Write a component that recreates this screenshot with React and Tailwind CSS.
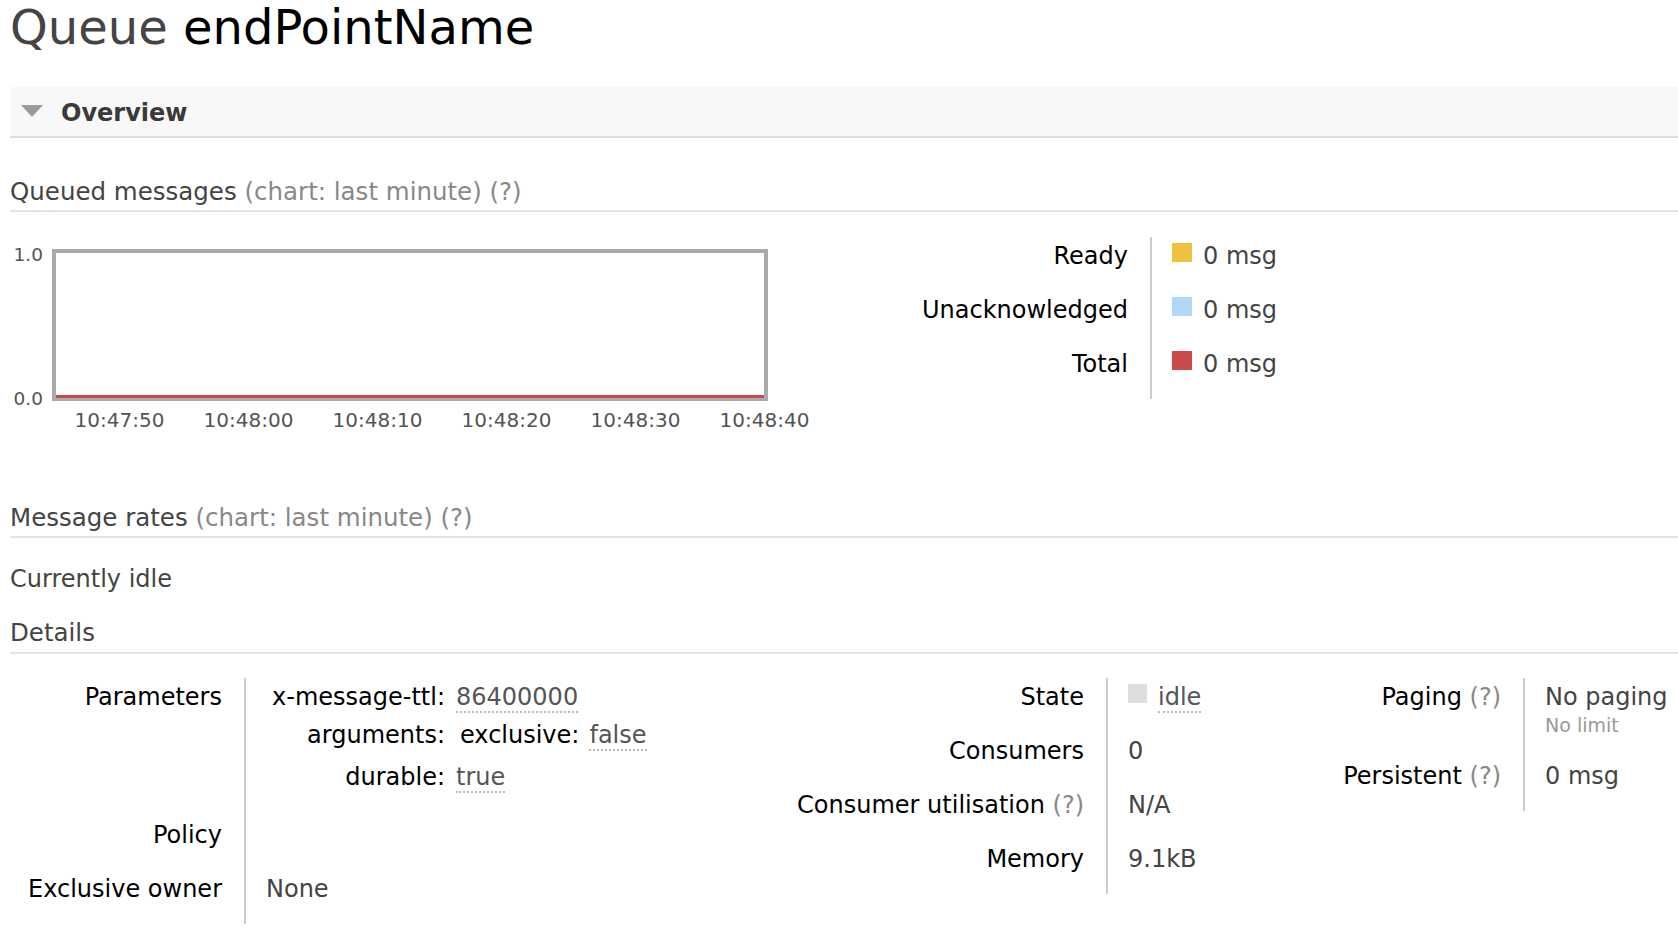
export default function App() {
  const legend = [
    { label: "Ready", sw: "bg-[#edc240]" },
    { label: "Unacknowledged", sw: "bg-[#afd8f8]" },
    { label: "Total", sw: "bg-[#cb4b4b]" },
  ];
  const times = ["10:47:50", "10:48:00", "10:48:10", "10:48:20", "10:48:30", "10:48:40"];
  const dotted = "border-b-2 border-dotted border-[#bbb] text-[#555]";
  return (
    <div className="min-h-[928px] bg-white pl-[10px] font-['DejaVu_Sans',Verdana,sans-serif] text-[24px] leading-[28px] text-black">
      <h1 className="text-[48px] leading-[55px] font-normal">
        <span className="text-[#444]">Queue</span> <span className="text-black">endPointName</span>
      </h1>

      <div className="mt-[32px] flex h-[51px] items-center border-b-2 border-[#dddddd] bg-[#f8f8f8] pt-[3px]">
        <svg width="22" height="12" viewBox="0 0 22 12" className="ml-[11px] -mt-[5px]">
          <polygon points="0,0 22,0 11,12" fill="#9a9a9a" />
        </svg>
        <span className="ml-[18px] font-bold text-[#3a3a3a]">Overview</span>
      </div>

      <div className="mt-[40px] border-b-2 border-[#e4e4e4] pb-[4px] text-[24.5px] text-[#444]">
        Queued messages <span className="text-[#888]">(chart: last minute) (?)</span>
      </div>

      <div className="flex items-start">
        <div className="w-[850px] mt-[37px]">
          <div className="flex items-start">
            <div className="-mt-[3px] -mb-[7px] flex h-[162px] w-[42px] flex-col justify-between pr-[9px] text-right text-[18.5px] leading-[18px] text-[#545454]">
              <span>1.0</span>
              <span>0.0</span>
            </div>
            <div className="flex h-[152px] w-[716px] flex-col justify-end border-x-4 border-t-4 border-b-[3px] border-[#aaaaaa] bg-white">
              <div className="h-[3px] bg-[#cb4b4b]" />
            </div>
          </div>
          <div className="ml-[45px] mt-[8px] flex text-[20px] leading-[22px] text-[#545454]">
            {times.map((t) => (
              <div key={t} className="w-[129px] shrink-0 text-center">
                {t}
              </div>
            ))}
          </div>
        </div>
        <div className="mt-[25px]">
          {legend.map((r) => (
            <div key={r.label} className="flex h-[54px]">
              <div className="w-[290px] pr-[22px] pt-[5px] text-right">{r.label}</div>
              <div className="flex items-start border-l-2 border-[#cccccc] pl-[20px] pt-[5px]">
                <span className={"mt-[1px] block h-[19px] w-[20px] " + r.sw} />
                <span className="ml-[11px] text-[#444]">0 msg</span>
              </div>
            </div>
          ))}
        </div>
      </div>

      <div className="mt-[73px] border-b-2 border-[#e4e4e4] pb-[4px] text-[24.5px] text-[#444]">
        Message rates <span className="text-[#888]">(chart: last minute) (?)</span>
      </div>

      <div className="mt-[27px] text-[#444]">Currently idle</div>

      <div className="mt-[26px] border-b-2 border-[#e4e4e4] pb-[5px] text-[24.5px] text-[#444]">Details</div>

      <div className="mt-[24px] flex items-start">
        <div className="w-[750px] shrink-0">
          <div className="flex">
            <div className="w-[234px] shrink-0 pr-[22px] pt-[5px] text-right">Parameters</div>
            <div className="flex flex-1 flex-col border-l-2 border-[#cccccc] pl-[20px] pt-[5px] pb-[25px]">
              <div className="flex">
                <span className="w-[179px] shrink-0 text-right">x-message-ttl:</span>
                <span className="pl-[11px]">
                  <span className={dotted}>86400000</span>
                </span>
              </div>
              <div className="mt-[10px] flex">
                <span className="w-[179px] shrink-0 text-right">arguments:</span>
                <span className="pl-[15px]">exclusive:</span>
                <span className="ml-[10px]">
                  <span className={dotted}>false</span>
                </span>
              </div>
              <div className="mt-[14px] flex">
                <span className="w-[179px] shrink-0 text-right">durable:</span>
                <span className="pl-[11px]">
                  <span className={dotted}>true</span>
                </span>
              </div>
            </div>
          </div>
          <div className="flex h-[54px]">
            <div className="w-[234px] shrink-0 pr-[22px] pt-[5px] text-right">Policy</div>
            <div className="flex-1 border-l-2 border-[#cccccc] pl-[20px] pt-[5px]" />
          </div>
          <div className="flex h-[54px]">
            <div className="w-[234px] shrink-0 pr-[22px] pt-[5px] text-right">Exclusive owner</div>
            <div className="flex-1 border-l-2 border-[#cccccc] pl-[20px] pt-[5px] text-[#444]">None</div>
          </div>
        </div>

        <div className="shrink-0">
          <div className="flex h-[54px]">
            <div className="w-[346px] shrink-0 pr-[22px] pt-[5px] text-right">State</div>
            <div className="flex w-[124px] items-start border-l-2 border-[#cccccc] pl-[20px] pt-[5px]">
              <span className="mt-[1px] block h-[19px] w-[19px] bg-[#dddddd]" />
              <span className="ml-[11px]">
                <span className={dotted}>idle</span>
              </span>
            </div>
          </div>
          <div className="flex h-[54px]">
            <div className="w-[346px] shrink-0 pr-[22px] pt-[5px] text-right">Consumers</div>
            <div className="w-[124px] border-l-2 border-[#cccccc] pl-[20px] pt-[5px] text-[#444]">0</div>
          </div>
          <div className="flex h-[54px]">
            <div className="w-[346px] shrink-0 pr-[22px] pt-[5px] text-right">
              Consumer utilisation <span className="text-[#888]">(?)</span>
            </div>
            <div className="w-[124px] border-l-2 border-[#cccccc] pl-[20px] pt-[5px] text-[#444]">N/A</div>
          </div>
          <div className="flex h-[54px]">
            <div className="w-[346px] shrink-0 pr-[22px] pt-[5px] text-right">Memory</div>
            <div className="w-[124px] border-l-2 border-[#cccccc] pl-[20px] pt-[5px] text-[#444]">9.1kB</div>
          </div>
        </div>

        <div className="shrink-0">
          <div className="flex">
            <div className="w-[293px] shrink-0 pr-[22px] pt-[5px] text-right">
              Paging <span className="text-[#888]">(?)</span>
            </div>
            <div className="flex flex-col border-l-2 border-[#cccccc] pl-[20px] pt-[5px] pb-[21px]">
              <span className="whitespace-nowrap text-[#444]">No paging</span>
              <span className="mt-[3px] text-[19px] leading-[22px] text-[#999]">No limit</span>
            </div>
          </div>
          <div className="flex h-[54px]">
            <div className="w-[293px] shrink-0 pr-[22px] pt-[5px] text-right">
              Persistent <span className="text-[#888]">(?)</span>
            </div>
            <div className="border-l-2 border-[#cccccc] pl-[20px] pt-[5px] text-[#444]">0 msg</div>
          </div>
        </div>
      </div>
    </div>
  );
}
